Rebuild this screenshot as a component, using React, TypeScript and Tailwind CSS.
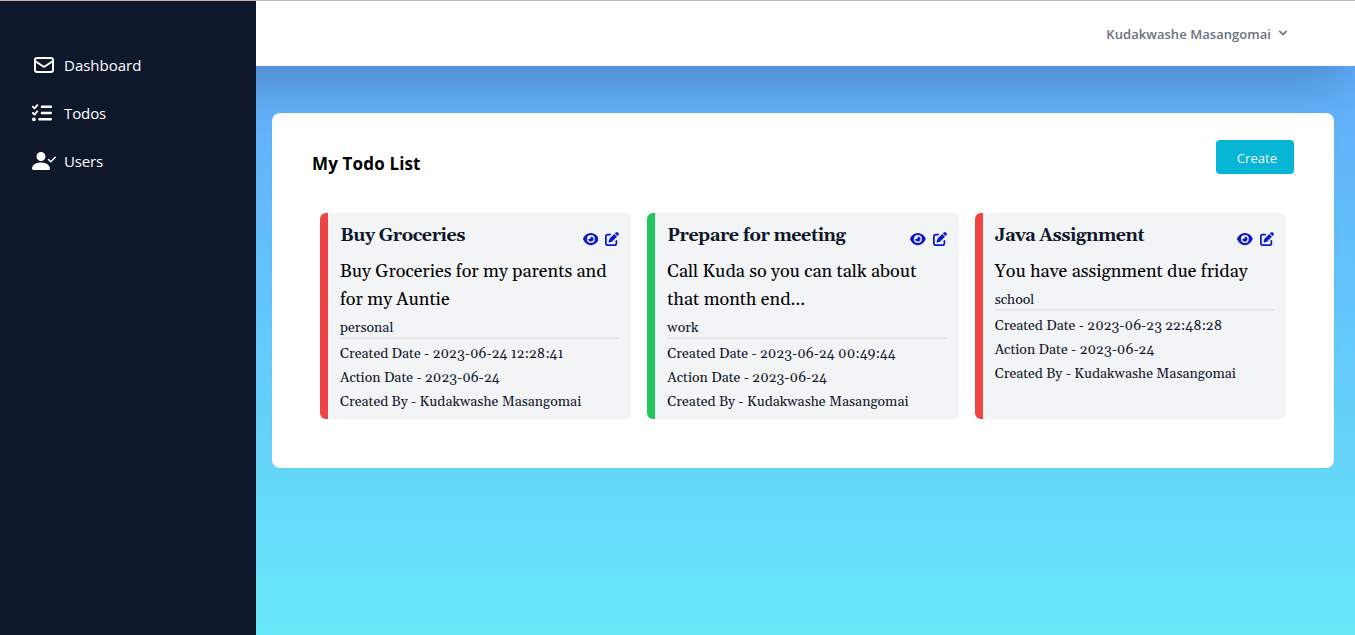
import React from "react";
import { HiOutlineMail } from "react-icons/hi";
import { FaListCheck, FaEye, FaPenToSquare } from "react-icons/fa6";
import { BsPersonCheckFill } from "react-icons/bs";

type Todo = {
  title: string;
  lines: string[];
  category: string;
  created: string;
  accent: string;
};

const todos: Todo[] = [
  {
    title: "Buy Groceries",
    lines: ["Buy Groceries for my parents and", "for my Auntie"],
    category: "personal",
    created: "2023-06-24 12:28:41",
    accent: "border-[#ef4444]",
  },
  {
    title: "Prepare for meeting",
    lines: ["Call Kuda so you can talk about", "that month end..."],
    category: "work",
    created: "2023-06-24 00:49:44",
    accent: "border-[#22c55e]",
  },
  {
    title: "Java Assignment",
    lines: ["You have assignment due friday"],
    category: "school",
    created: "2023-06-23 22:48:28",
    accent: "border-[#ef4444]",
  },
];

function TodoCard({ todo }: { todo: Todo }) {
  return (
    <article
      className={`rounded-md border-l-8 bg-[#f3f4f6] px-3 pt-2 pb-[6px] font-['Georgia','Gelasio','Liberation_Serif',serif] whitespace-nowrap text-[#0f172a] ${todo.accent}`}
    >
      <div className="flex h-9 justify-between">
        <h2 className="pt-px text-lg leading-7 font-bold tracking-tight">{todo.title}</h2>
        <div className="flex items-center gap-[7px] text-[#0c18cf]">
          <FaEye className="h-[14px] w-[15.75px]" />
          <FaPenToSquare className="h-[14px] w-[14px]" />
        </div>
      </div>
      <div className="pt-px text-lg leading-7 text-black">
        {todo.lines.map((l) => (
          <p key={l}>{l}</p>
        ))}
      </div>
      <p className="h-[25px] border-b-2 border-[#e5e7eb] text-sm leading-7">{todo.category}</p>
      <div className="pt-[3px] -mb-px text-sm leading-6">
        <p>Created Date - {todo.created}</p>
        <p>Action Date - 2023-06-24</p>
        <p>Created By - Kudakwashe Masangomai</p>
      </div>
    </article>
  );
}

export default function App() {
  return (
    <div className="flex h-[635px] w-full flex-col overflow-hidden border-t border-[#c4b5b3] font-['Segoe_UI','Open_Sans',sans-serif]">
      <div className="flex min-h-0 flex-1">
        <aside className="z-20 w-64 shrink-0 bg-[#0f172a] px-8 pt-10 text-[15px] text-white">
          <nav className="flex flex-col">
            <a className="flex h-12 items-center">
              <HiOutlineMail className="mr-2 h-6 w-6" />
              <span>Dashboard</span>
            </a>
            <a className="flex h-12 items-center">
              <FaListCheck className="mr-3 h-5 w-5" />
              <span className="tracking-[-0.1px]">Todos</span>
            </a>
            <a className="flex h-12 items-center">
              <BsPersonCheckFill className="mr-2 h-6 w-6" />
              <span className="tracking-[-0.15px]">Users</span>
            </a>
          </nav>
        </aside>
        <div className="flex min-w-0 flex-1 flex-col bg-linear-to-b from-[#60a5fa] to-[#67e8f9]">
          <header className="z-10 -ml-64 flex h-[65px] shrink-0 items-center justify-end border-b border-[#f3f4f6] bg-white pr-16 shadow-[0_25px_50px_-12px_rgba(0,0,0,0.25)]">
            <button className="flex items-center text-[13px] font-semibold text-[#6b7280]">
              <span className="pt-[2px] leading-5 tracking-[0.05px]">Kudakwashe Masangomai</span>
              <svg className="ml-1 h-4 w-4 fill-current" viewBox="0 0 20 20">
                <path
                  fillRule="evenodd"
                  clipRule="evenodd"
                  d="M5.293 7.293a1 1 0 011.414 0L10 10.586l3.293-3.293a1 1 0 111.414 1.414l-4 4a1 1 0 01-1.414 0l-4-4a1 1 0 010-1.414z"
                />
              </svg>
            </button>
          </header>
          <main className="mt-[47px] mr-[21px] ml-4 h-[355px] rounded-lg bg-white shadow-[0_1px_2px_rgba(0,0,0,0.05)]">
            <div className="flex h-[100px] items-start justify-between pt-[27px] pr-10 pl-10">
              <h1 className="pt-[10px] text-[17px] leading-7 font-bold tracking-[0.15px] text-black">My Todo List</h1>
              <button className="h-[34px] w-[78px] rounded-[4px] bg-[#06b6d4] pt-[3px] pl-1 text-[13px] tracking-[0.05px] text-[#f3f4f6]">
                Create
              </button>
            </div>
            <div className="grid grid-cols-3 gap-4 px-12">
              {todos.map((t) => (
                <TodoCard key={t.title} todo={t} />
              ))}
            </div>
          </main>
        </div>
      </div>
    </div>
  );
}
